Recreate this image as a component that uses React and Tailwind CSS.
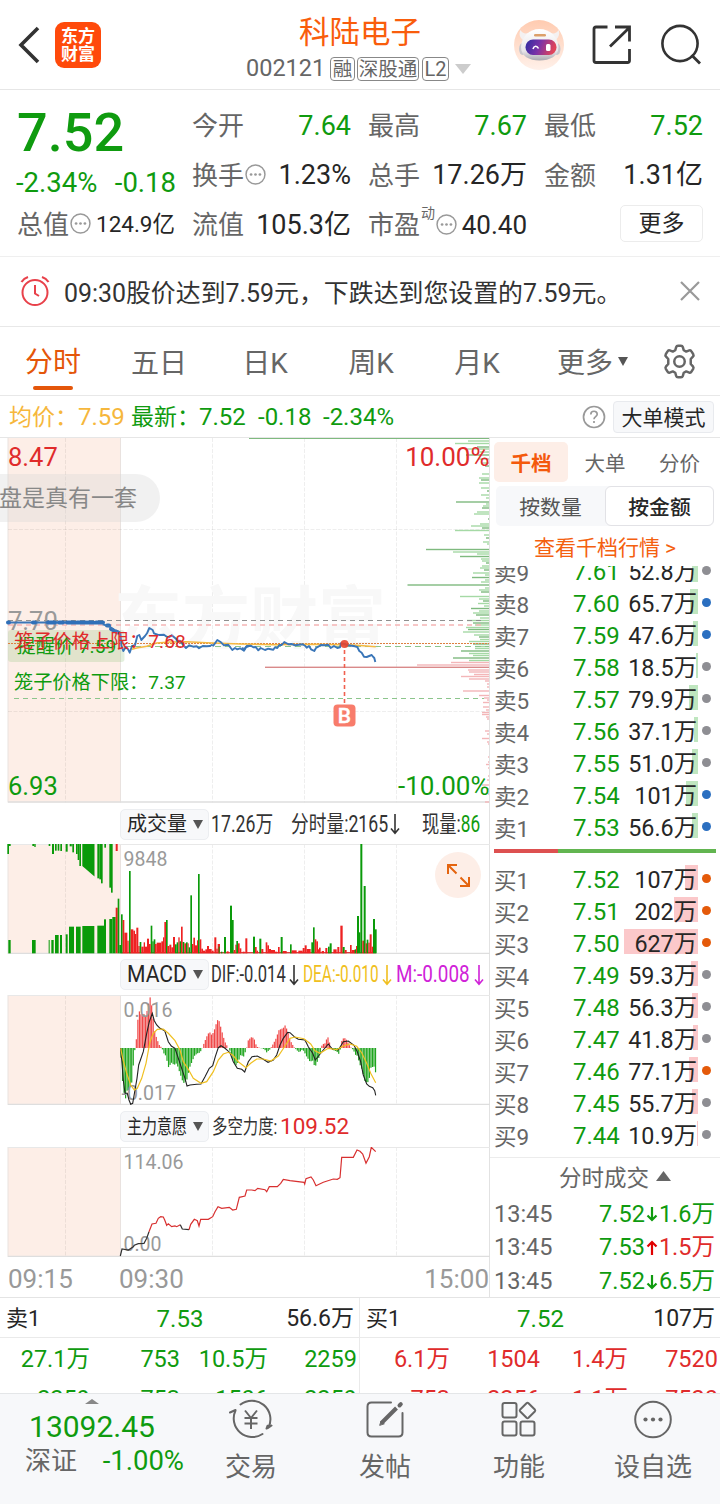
import React from "react";

const GREEN = "#0f9b0f";
const RED = "#e02b2b";

const pts = (arr, oy, ox = 0) =>
  arr.map(([x, y]) => `${(ox + x / 3).toFixed(1)},${(oy + y / 3).toFixed(1)}`).join(" ");

/* ---------- shared bits ---------- */

function Dots() {
  return (
    <svg className="mb-[2px] ml-px shrink-0" width="21" height="21" viewBox="0 0 20 20">
      <circle cx="10" cy="10" r="9" fill="none" stroke="#999" strokeWidth="1.4" />
      <circle cx="5.8" cy="10" r="1.3" fill="#999" />
      <circle cx="10" cy="10" r="1.3" fill="#999" />
      <circle cx="14.2" cy="10" r="1.3" fill="#999" />
    </svg>
  );
}

function Down({ className = "" }) {
  return (
    <svg className={`shrink-0 ${className}`} width="10" height="22" viewBox="0 0 10 22" fill="none" stroke="currentColor" strokeWidth="1.6">
      <path d="M5 1V20M1 15.5L5 20.2L9 15.5" />
    </svg>
  );
}

function Caret({ className = "" }) {
  return (
    <svg className={`shrink-0 ${className}`} width="10" height="9" viewBox="0 0 10 9">
      <path d="M0 0H10L5 9Z" fill="#555" />
    </svg>
  );
}

/* ---------- header ---------- */

function Header() {
  return (
    <header className="flex h-[90px] shrink-0 border-b border-[#e6e6e6]">
      <div className="flex w-[246px] items-center pl-[17px]">
        <svg width="24" height="40" viewBox="0 0 24 40" fill="none" stroke="#333" strokeWidth="3.6">
          <path d="M21 3L4 20L21 37" />
        </svg>
        <div className="ml-[14px] flex h-[46px] w-[46px] flex-col items-center justify-center rounded-[9px] bg-[#ff4a0b] text-[17px] leading-[18px] font-bold text-white">
          <span>东方</span>
          <span>财富</span>
        </div>
      </div>
      <div className="flex w-[228px] flex-col items-center">
        <div className="mt-[15px] flex h-9 items-center text-[30.5px] leading-none text-[#f95d0c]">科陆电子</div>
        <div className="flex h-[36px] w-full items-center text-[23.5px] leading-none text-[#666]">
          <span className="w-[84px]">002121</span>
          <span className="mr-[2px] flex h-6 w-[25px] items-center justify-center rounded-[4px] border border-[#888] pt-px text-[19.5px]">融</span>
          <span className="mr-[3px] flex h-6 w-[62px] items-center justify-center rounded-[4px] border border-[#888] pt-px text-[19.5px]">深股通</span>
          <span className="flex h-6 w-[27px] items-center justify-center rounded-[4px] border border-[#888] text-[20px]">L2</span>
          <svg className="ml-[6px]" width="16" height="10" viewBox="0 0 16 10">
            <path d="M0 0H16L8 10Z" fill="#ccc" />
          </svg>
        </div>
      </div>
      <div className="flex flex-1 items-center pl-10">
        <svg width="50" height="50" viewBox="0 0 50 50">
          <defs>
            <linearGradient id="halo" x1="0" y1="0" x2="0" y2="1">
              <stop offset="0" stopColor="#ffcbb0" />
              <stop offset="1" stopColor="#fff1ea" />
            </linearGradient>
            <linearGradient id="shell" x1="0" y1="0" x2="0" y2="1">
              <stop offset="0" stopColor="#ffffff" />
              <stop offset="0.7" stopColor="#e8e6e9" />
              <stop offset="1" stopColor="#a9a9b0" />
            </linearGradient>
            <linearGradient id="visor" x1="0" y1="0" x2="1" y2="0.2">
              <stop offset="0" stopColor="#2c2ba0" />
              <stop offset="0.5" stopColor="#7a32a8" />
              <stop offset="1" stopColor="#e0445a" />
            </linearGradient>
          </defs>
          <circle cx="25" cy="25" r="25" fill="url(#halo)" />
          <path d="M9 20C5 17 5 13 6.500 10C8 13 11 14 14 13L14 20ZM42 20C45 17 46 13 44.500 10C43 13 40 14 37 13L37 20Z" fill="#f4f1f1" />
          <ellipse cx="8.500" cy="29" rx="3.500" ry="6" fill="#c9c8ce" />
          <ellipse cx="43" cy="29" rx="3.500" ry="6" fill="#c9c8ce" />
          <path d="M25.500 9C36 9 44 17 44.500 27C44.500 36 36 40.500 25.500 40.500C15 40.500 7 36 7 27C7.500 17 15 9 25.500 9Z" fill="url(#shell)" />
          <rect x="20" y="14" width="12" height="2.600" rx="1.300" fill="#dca06a" />
          <rect x="11.500" y="19.500" width="31" height="15.500" rx="7.500" fill="url(#visor)" />
          <path d="M19 29C20 25.500 23 25.500 24.500 28.500" fill="none" stroke="#fff" strokeWidth="1.600" />
          <rect x="32" y="24" width="4.500" height="7" rx="1.500" fill="#fff" />
        </svg>
        <svg className="ml-[28px]" width="40" height="40" viewBox="0 0 40 40" fill="none" stroke="#333" strokeWidth="2.8">
          <path d="M15.500 2H4Q2 2 2 4V35.500Q2 37.500 4 37.500H35.500Q37.500 37.500 37.500 35.500V24" />
          <path d="M23 2H37.500V16.500M37 3L18 21.500" />
        </svg>
        <svg className="ml-[29px]" width="42" height="42" viewBox="0 0 42 42" fill="none" stroke="#333" strokeWidth="2.600">
          <circle cx="19" cy="19.500" r="17.600" />
          <path d="M30.500 31L39 39.500" strokeWidth="2.800" />
        </svg>
      </div>
    </header>
  );
}

/* ---------- quote summary ---------- */

function Pair({ label, value, green, extra, h = "h-[49px]" }) {
  return (
    <div className={`flex items-center justify-between leading-none ${h}`}>
      <span className="flex items-center text-[26px] text-[#666]">{label}{extra}</span>
      <span className={`text-[27px] whitespace-nowrap ${green ? "text-[#0f9b0f]" : "text-[#262626]"}`}>{value}</span>
    </div>
  );
}

function Quote() {
  return (
    <section className="grid h-[167px] shrink-0 grid-cols-[158px_159px_159px_159px] gap-x-[17px] border-b border-[#efefef] pl-[17px]">
      <div className="pt-2">
        <div className="flex h-[69px] items-center text-[54px] leading-none font-medium text-[#0f9b0f]">7.52</div>
        <div className="-ml-px flex h-8 w-[160px] items-center justify-between text-[27.5px] leading-none whitespace-nowrap text-[#0f9b0f]">
          <span>-2.34%</span>
          <span>-0.18</span>
        </div>
        <div className="flex h-[50px] items-center justify-between pt-px leading-none">
          <span className="flex items-center text-[26px] text-[#666]">总值<Dots /></span>
          <span className="text-[22.5px] text-[#262626]">124.9亿</span>
        </div>
      </div>
      <div className="pt-[11px]">
        <Pair h="h-[50px]" label="今开" value="7.64" green />
        <Pair label="换手" value="1.23%" extra={<Dots />} />
        <Pair h="h-[50px]" label="流值" value="105.3亿" />
      </div>
      <div className="pt-[11px]">
        <Pair h="h-[50px]" label="最高" value="7.67" green />
        <Pair label="总手" value="17.26万" />
        <div className="flex h-[50px] items-center justify-between leading-none">
          <span className="flex items-center text-[26px] text-[#666]">
            市盈
            <span className="mb-6 ml-px text-[14px]">动</span>
            <Dots />
          </span>
          <span className="text-[26px] text-[#262626]">40.40</span>
        </div>
      </div>
      <div className="pt-[11px]">
        <Pair h="h-[50px]" label="最低" value="7.52" green />
        <Pair label="金额" value="1.31亿" />
        <div className="flex h-[46px] items-center justify-end">
          <button className="flex h-[37px] w-[83px] items-center justify-center rounded-[5px] border border-[#ececec] text-[23px] leading-none text-[#262626]">更多</button>
        </div>
      </div>
    </section>
  );
}

function Alert() {
  return (
    <section className="flex h-[70px] shrink-0 items-center border-b border-[#e8e8e8] pl-5">
      <svg className="mb-[2px]" width="30" height="32" viewBox="0 0 30 32" fill="none" stroke="#e8414a" strokeWidth="2">
        <circle cx="15" cy="17.500" r="12.500" />
        <path d="M15 10V18.500L19 21" />
        <path d="M1.500 7C3 4.500 5 3 8 2M28.500 7C27 4.500 25 3 22 2" strokeWidth="2.200" />
      </svg>
      <div className="ml-[14px] flex-1 pt-[5px] text-[24.9px] leading-none whitespace-nowrap text-[#333]">09:30股价达到7.59元，下跌达到您设置的7.59元。</div>
      <svg className="mr-5 mb-[2px]" width="20" height="20" viewBox="0 0 20 20" stroke="#999" strokeWidth="2.200">
        <path d="M1 1L19 19M19 1L1 19" />
      </svg>
    </section>
  );
}

function Tabs() {
  return (
    <nav className="flex h-[69px] shrink-0 items-center border-b border-[#e8e8e8] text-[28px] leading-none text-[#666]">
      <div className="flex h-full w-[106px] flex-col items-center text-[#e4560a]">
        <span className="flex h-[59px] items-center pt-[13px]">分时</span>
        <span className="h-1 w-10 rounded-full bg-[#e4560a]" />
      </div>
      {["五日", "日K", "周K", "月K"].map((t) => (
        <div key={t} className="flex h-full w-[106px] justify-center pt-[23px]">{t}</div>
      ))}
      <div className="flex h-full items-start pt-[23px] pl-[27px]">
        更多
        <Caret className="mt-[7px] ml-[5px]" />
      </div>
      <svg className="ml-[34px]" width="35" height="35" viewBox="0 0 24 24" fill="none" stroke="#666" strokeWidth="1.700" strokeLinejoin="round">
        <path d="M9.700 2.200Q10 1.200 11 1.200H13Q14 1.200 14.300 2.200L14.900 4.300L16.600 5.200L18.700 4.400Q19.700 4.100 20.200 5L21.400 7Q21.900 7.900 21.200 8.700L19.700 10.300V13.700L21.200 15.300Q21.900 16.100 21.400 17L20.200 19Q19.700 19.900 18.700 19.600L16.600 18.800L14.900 19.700L14.300 21.800Q14 22.800 13 22.800H11Q10 22.800 9.700 21.800L9.100 19.700L7.400 18.800L5.300 19.600Q4.300 19.900 3.800 19L2.600 17Q2.100 16.100 2.800 15.300L4.300 13.700V10.300L2.800 8.700Q2.100 7.900 2.600 7L3.800 5Q4.300 4.100 5.300 4.400L7.400 5.200L9.100 4.300Z" />
        <circle cx="12" cy="12" r="3.600" />
      </svg>
    </nav>
  );
}

function InfoRow() {
  return (
    <div className="flex h-[42px] shrink-0 items-center border-b border-[#e6e6e6] pt-px pl-[9px] text-[24px] leading-none whitespace-nowrap text-[#0f9b0f]">
      <span className="w-[69px] pt-px text-[23px] text-[#f6b73c]">均价：</span>
      <span className="w-[53px] text-[#f6b73c]">7.59</span>
      <span className="w-[68px] pt-px text-[23px]">最新：</span>
      <span className="w-[59px]">7.52</span>
      <span className="w-[65px]">-0.18</span>
      <span className="flex-1">-2.34%</span>
      <svg width="24" height="24" viewBox="0 0 24 24" fill="none" stroke="#999" strokeWidth="1.700">
        <circle cx="12" cy="12" r="10.500" />
        <path d="M8.800 9.500C8.800 5.200 15.200 5.200 15.200 9.300C15.200 11.700 12 11.700 12 14.300M12 16V18" />
      </svg>
      <span className="mr-[6px] ml-[7px] flex h-8 w-[101px] items-center justify-center rounded-[4px] border border-[#e8eaee] bg-[#f7f8fa] pt-[3px] text-[21px] text-[#262626]">大单模式</span>
    </div>
  );
}

/* ---------- charts ---------- */

const priceA = [[308, 565], [318, 568], [330, 572], [340, 582], [350, 585], [361, 590], [364, 628], [370, 645], [378, 632], [383, 638], [389, 650], [396, 630], [405, 628], [412, 600], [418, 597], [424, 612], [435, 600], [441, 592], [448, 576], [458, 582], [462, 592], [475, 597], [492, 596], [500, 602], [507, 604], [515, 598], [528, 608], [533, 618], [540, 614], [550, 628], [558, 636], [568, 628], [580, 632], [590, 631], [597, 637], [608, 630], [620, 631], [630, 630], [635, 627], [640, 629], [652, 612], [663, 619], [672, 628], [685, 626], [697, 642], [705, 636], [712, 640], [720, 637], [730, 643], [737, 634], [747, 630]];
const priceB = [[7, 634], [12, 644], [20, 630], [33, 629], [40, 634], [47, 633], [55, 643], [62, 636], [75, 642], [85, 638], [100, 641], [105, 634], [112, 636], [118, 627], [125, 627], [133, 618], [145, 625], [155, 624], [165, 628], [188, 625], [195, 629], [200, 635], [207, 630], [213, 640], [223, 645], [228, 636], [235, 632], [242, 627], [255, 628], [265, 626], [272, 636], [282, 630], [292, 636], [300, 634], [303, 622], [313, 624], [325, 628], [345, 631], [352, 633], [358, 645], [365, 650], [372, 662], [380, 663], [395, 657], [400, 663], [403, 666], [406, 678]];
const avg = [[396, 640], [410, 636], [440, 631], [470, 621], [510, 618], [560, 617], [620, 620], [720, 624], [820, 626], [950, 625], [1060, 627], [1090, 629], [1127, 632]];

const depthSell = [[438.3, 240], [441, 21], [443.5, 34], [447, 12], [449, 22], [452, 9], [455, 23], [459, 11], [463, 8], [466, 4], [474, 7], [478, 10], [480, 8], [483, 10], [488, 8], [491, 2], [495, 8], [498, 3], [502, 33], [504, 3], [506, 6], [508, 7], [512, 12], [514, 15], [519, 1], [524, 9], [526, 18], [528, 7], [530.5, 34], [535, 5], [538, 3], [542, 6], [544, 2], [549.500, 63], [552, 36], [554, 12], [556.500, 29], [559, 8], [561, 7], [563, 3], [566, 7], [568, 9], [570, 5], [573, 16], [575, 4], [577.5, 17], [580, 4], [582, 8], [585, 81.5], [588, 4], [590, 10], [592, 8], [596.5, 29], [599, 10], [601, 6], [603.500, 11], [606, 5], [608.5, 18], [611, 10], [613, 16], [615, 13], [618, 9], [620.500, 22], [623, 16], [625, 14], [627.500, 23], [629.500, 21], [632, 26], [635, 15], [637, 10], [639.500, 9], [641.500, 20], [644, 16], [646.500, 14], [648.500, 14], [651, 28], [653.500, 20], [655.500, 16], [658, 36], [660.500, 20]];
const depthBuy = [[662.500, 38], [665, 72], [667.3, 224], [670, 21], [672, 20], [674.500, 15], [676.500, 28], [679, 20], [681, 4], [684, 2], [687, 2], [691, 26], [695.500, 10], [698, 5], [700, 2], [702.500, 6], [707, 6], [710, 3], [712.500, 7], [714.500, 7], [717, 3], [719, 2], [731, 4], [734, 2], [738.500, 7], [742, 2], [744, 1], [757, 1], [762, 1], [764.500, 3], [768, 1], [776, 1], [780, 2], [785, 7], [789, 2], [794, 1], [802, 4]];

function Grid({ top, bottom }) {
  return (
    <g>
      <rect x="8" y={top} width="112.500" height={bottom - top} fill="#fdeee7" />
      <g stroke="#000" strokeOpacity="0.065" strokeWidth="1" strokeDasharray="4 1.500">
        {[65.5, 212.5, 304.5, 396.5].map((x) => (
          <path key={x} d={`M${x} ${top}V${bottom}`} />
        ))}
      </g>
      <path d={`M8 ${top}V${bottom}M120.500 ${top}V${bottom}`} stroke="#e9e2df" />
      <path d={`M8 ${bottom - 0.5}H490`} stroke="#dedede" strokeWidth="1.400" />
    </g>
  );
}

function PriceChart() {
  return (
    <svg className="block shrink-0" width="490" height="365" viewBox="0 438 490 365">
      <Grid top={438} bottom={802.500} />
      <path d="M8 529.500H489M8 711.500H489" stroke="#000" strokeOpacity="0.065" strokeDasharray="4 1.500" />
      <text x="114" y="643" fontSize="68" fontWeight="700" fill="#f8f8f8">东方财富</text>
      {depthSell.map(([y, l], i) => (
        <rect key={i} x={489 - l} y={y - 0.7} width={l} height="1.400" fill={i % 3 ? "#a5d9a5" : "#7fba7f"} />
      ))}
      {depthBuy.map(([y, l], i) => (
        <rect key={i} x={489 - l} y={y - 0.7} width={l} height="1.400" fill={i === 2 ? "#d98a8a" : "#f3b6b8"} />
      ))}
      <path d="M8 620.500H484" stroke="#8f8f8f" strokeWidth="1.200" strokeDasharray="5 4" />
      <path d="M8 625H484" stroke="#f5b5b5" strokeWidth="1.400" strokeDasharray="5 4" />
      <rect x="8" y="630" width="116.500" height="32" rx="3" fill="#9bc98a" fillOpacity="0.28" />
      <path d="M8 643.500H489" stroke="#dd8040" strokeWidth="1" strokeDasharray="2 1" />
      <path d="M125 646.500H489" stroke="#8cc58c" strokeWidth="1.200" strokeDasharray="6 4" />
      <path d="M14 698.500H484" stroke="#8cc58c" strokeWidth="1.200" strokeDasharray="5 4" />
      <polyline points={pts(avg, 436)} fill="none" stroke="#f5b942" strokeWidth="1.500" />
      <text x="8" y="629.500" fontSize="25.500" fill="#999">7.70</text>
      <path d="M8 622.500H103" stroke="#3a76b8" strokeWidth="2" />
      <path d="M8 622.500H9M33 622.500H35M48 622.500H55M59 622.500H63M67 622.500H74M77 622.500H86M88 622.500H93M96 622.500H103M107 625.500H109M111 629L113 630M116 631.500L118 632.500" stroke="#2f6fb8" strokeWidth="4" strokeLinecap="round" />
      <g fill="none" stroke="#3a76b8" strokeWidth="1.900" strokeLinejoin="round">
        <polyline points={pts(priceA, 436)} />
        <polyline points={pts(priceB, 436, 240)} />
      </g>
      <g fontSize="25.500">
        <text x="8" y="466" fill={RED}>8.47</text>
        <text x="8" y="795" fill={GREEN}>6.93</text>
        <text x="489.500" y="466" fill={RED} textAnchor="end" fontSize="26">10.00%</text>
        <text x="489.500" y="795" fill={GREEN} textAnchor="end" fontSize="26">-10.00%</text>
      </g>
      <g fontSize="19.200">
        <text x="16.500" y="652.500" fill={GREEN}>提醒价 7.59</text>
        <text x="14" y="648" fill={RED}>笼子价格上限：7.68</text>
        <text x="14" y="689" fill={GREEN}>笼子价格下限：7.37</text>
      </g>
      <path d="M344.500 650V704" stroke="#f0604f" strokeWidth="1.600" strokeDasharray="4 3" />
      <circle cx="344.500" cy="644" r="4" fill="#e8452f" fillOpacity="0.9" />
      <rect x="333.500" y="704.500" width="22" height="22" rx="4" fill="#f87c6b" />
      <text x="344.500" y="722.500" fontSize="21" fontWeight="500" fill="#fff" textAnchor="middle" stroke="#fff" strokeWidth="0.400">B</text>
    </svg>
  );
}

const auctionTop = [[22, 27, 162], [27, 32, 138], [97, 103, 138], [103, 107, 141], [146, 151, 138], [156, 162, 162], [165, 170, 152], [173, 178, 152], [181, 186, 153], [197, 203, 155], [209, 214, 139], [214, 217, 139], [217, 222, 157], [228, 233, 162], [233, 238, 180], [238, 243, 198], [292, 298, 235], [298, 303, 238], [303, 308, 250], [313, 318, 143], [328, 333, 263], [333, 338, 278]];
const auctionBottom = [[25, 32, 420], [96, 107, 420], [146, 149, 420], [154, 161, 420], [165, 176, 405], [180, 186, 405], [197, 203, 403], [207, 222, 380], [228, 242, 380], [247, 283, 378], [292, 312, 377], [312, 318, 358], [328, 337, 357], [337, 347, 351]];
const vol = [["g", 353, 358, 296], ["g", 358, 363, 435], ["g", 363, 368, 343], ["r", 368, 373, 360], ["r", 373, 382, 398], ["r", 382, 386, 422], ["g", 387, 392, 213], ["r", 392, 400, 388], ["r", 400, 405, 392], ["r", 405, 409, 402], ["r", 409, 415, 383], ["r", 415, 419, 438], ["g", 419, 424, 426], ["r", 424, 431, 440], ["r", 431, 435, 427], ["r", 435, 441, 440], ["r", 441, 447, 416], ["g", 452, 457, 377], ["r", 447, 452, 432], ["g", 457, 461, 424], ["g", 461, 466, 418], ["r", 464, 470, 432], ["r", 470, 484, 428], ["r", 484, 489, 424], ["r", 489, 493, 412], ["r", 493, 498, 366], ["g", 498, 503, 360], ["r", 502, 508, 438], ["r", 508, 514, 434], ["r", 514, 519, 442], ["r", 519, 525, 411], ["g", 525, 530, 433], ["g", 530, 535, 427], ["r", 535, 539, 412], ["g", 539, 543, 424], ["r", 543, 548, 380], ["g", 548, 553, 426], ["r", 553, 558, 430], ["g", 558, 563, 427], ["r", 563, 566, 430], ["g", 566, 570, 442], ["g", 571, 576, 286], ["r", 576, 580, 432], ["r", 580, 585, 413], ["r", 585, 591, 436], ["r", 591, 595, 421], ["g", 594, 599, 222], ["r", 599, 604, 418], ["r", 604, 609, 446], ["r", 609, 616, 452], ["r", 616, 621, 448], ["r", 621, 627, 438], ["r", 627, 635, 447], ["r", 635, 641, 452], ["r", 643, 649, 412], ["r", 649, 653, 446], ["r", 653, 660, 432], ["g", 656, 659, 440], ["g", 663, 667, 455], ["g", 672, 678, 411], ["r", 680, 686, 454], ["g", 690, 696, 317], ["g", 696, 701, 360], ["r", 701, 706, 450], ["r", 706, 710, 434], ["g", 709, 714, 423], ["r", 714, 719, 430], ["r", 719, 724, 445], ["r", 728, 734, 455], ["r", 736, 742, 415], ["g", 759, 765, 410], ["r", 765, 770, 441], ["r", 770, 774, 452], ["g", 778, 784, 416], ["r", 784, 790, 447], ["r", 797, 802, 427], ["r", 802, 807, 436], ["r", 807, 813, 447], ["r", 813, 825, 450], ["r", 825, 832, 455], ["r", 834, 839, 441], ["g", 842, 848, 411], ["r", 848, 860, 453], ["g", 870, 875, 433], ["r", 875, 890, 451], ["r", 895, 908, 452], ["r", 908, 914, 444], ["r", 914, 920, 436], ["r", 920, 932, 447], ["g", 934, 939, 427], ["g", 939, 944, 382], ["r", 944, 949, 418], ["r", 949, 954, 424], ["r", 954, 958, 448], ["r", 957, 962, 443], ["r", 965, 972, 453], ["r", 976, 982, 444], ["g", 984, 989, 440], ["g", 989, 995, 430], ["r", 1000, 1010, 448], ["r", 1012, 1018, 441], ["r", 1021, 1028, 377], ["g", 1028, 1034, 441], ["r", 1034, 1040, 450], ["r", 1050, 1055, 435], ["r", 1055, 1065, 450], ["g", 1064, 1069, 448], ["r", 1068, 1073, 438], ["g", 1071, 1077, 348], ["g", 1077, 1081, 397], ["g", 1081, 1087, 132], ["r", 1087, 1092, 422], ["g", 1091, 1097, 258], ["r", 1097, 1101, 430], ["g", 1100, 1105, 419], ["r", 1105, 1109, 428], ["r", 1109, 1115, 403], ["r", 1115, 1119, 440], ["g", 1119, 1125, 357], ["g", 1125, 1130, 388]];

function VolumeChart() {
  return (
    <svg className="block shrink-0" width="490" height="110" viewBox="0 844 490 110">
      <Grid top={844} bottom={954} />
      <path d="M8 844.500H490" stroke="#e8e8e8" />
      <g fill="#0a9a0a">
        {auctionTop.map(([a, b, y], i) => (
          <rect key={i} x={a / 3} y="844" width={(b - a) / 3} height={(y - 132) / 3} />
        ))}
        <path d="M82.300 844H94.500V876.500L82.300 866Z" />
        {auctionBottom.map(([a, b, y], i) => (
          <rect key={i} x={a / 3} y={800 + y / 3} width={(b - a) / 3} height={(460 - y) / 3} />
        ))}
      </g>
      <rect x="115.700" y="844" width="2" height="7" fill="#e82020" />
      <rect x="115.700" y="907.700" width="2" height="45.600" fill="#e82020" />
      <rect x="120.500" y="952" width="255.500" height="1.300" fill="#d94040" />
      <text x="123.500" y="865.500" fontSize="19.500" fill="#999">9848</text>
      {vol.map(([c, a, b, y], i) => (
        <rect key={i} x={a / 3} y={800 + y / 3} width={(b - a) / 3} height={(460 - y) / 3} fill={c === "g" ? "#0a9a0a" : "#ee2222"} />
      ))}
    </svg>
  );
}

const macd = [[362, 746], [364, 800], [366, 835], [370, 855], [375, 908], [380, 872], [385, 872], [390, 862], [395, 850], [402, 772], [405, 745], [408, 733], [412, 672], [417, 632], [424, 645], [430, 640], [437, 648], [442, 630], [446, 610], [449, 588], [453, 600], [458, 640], [463, 690], [470, 715], [478, 735], [486, 744], [490, 758], [498, 768], [505, 802], [515, 788], [522, 795], [530, 790], [540, 820], [550, 850], [560, 842], [565, 820], [570, 800], [575, 788], [583, 768], [592, 760], [600, 758], [607, 744], [612, 730], [620, 710], [628, 695], [636, 706], [643, 690], [652, 660], [657, 662], [662, 680], [670, 710], [676, 728], [685, 744], [692, 756], [697, 775], [707, 797], [715, 785], [722, 765], [732, 770], [738, 748], [742, 738], [745, 720], [756, 710], [763, 718], [770, 740], [780, 744], [790, 746], [795, 750], [800, 757], [810, 748], [816, 738], [827, 718], [837, 690], [850, 684], [855, 676], [862, 690], [870, 720], [880, 738], [884, 744], [890, 750], [898, 757], [908, 748], [915, 760], [920, 770], [930, 785], [938, 782], [945, 802], [952, 785], [960, 765], [963, 744], [967, 733], [975, 730], [983, 709], [988, 725], [992, 742], [998, 750], [1010, 754], [1016, 762], [1021, 748], [1024, 725], [1032, 712], [1040, 720], [1048, 735], [1054, 744], [1060, 750], [1067, 765], [1073, 768], [1078, 790], [1087, 810], [1095, 845], [1103, 848], [1108, 835], [1113, 802], [1122, 800], [1128, 822]];

const macdBars = (() => {
  const out = [];
  for (let x = 363; x <= 1127; x += 4.6) {
    let i = 0;
    while (i < macd.length - 2 && macd[i + 1][0] < x) i++;
    const [x0, y0] = macd[i];
    const [x1, y1] = macd[i + 1];
    out.push([x, y0 + ((y1 - y0) * (x - x0)) / (x1 - x0)]);
  }
  return out;
})();

const dif = [[362, 745], [366, 790], [370, 840], [375, 880], [382, 880], [387, 900], [392, 913], [398, 910], [405, 870], [411, 835], [416, 795], [430, 755], [440, 700], [448, 665], [457, 640], [463, 662], [470, 675], [480, 685], [494, 692], [505, 725], [514, 738], [525, 745], [540, 790], [555, 835], [561, 858], [570, 855], [590, 853], [603, 852], [615, 830], [628, 805], [638, 797], [646, 770], [655, 743], [663, 737], [675, 745], [690, 758], [700, 785], [712, 805], [725, 808], [734, 816], [745, 785], [756, 770], [772, 768], [790, 778], [804, 787], [820, 780], [830, 765], [840, 735], [850, 715], [863, 697], [870, 698], [885, 712], [895, 718], [915, 720], [925, 740], [938, 760], [946, 780], [958, 765], [970, 750], [985, 732], [997, 747], [1015, 750], [1030, 725], [1045, 723], [1062, 736], [1072, 755], [1082, 785], [1090, 825], [1100, 852], [1108, 859], [1118, 863], [1124, 872], [1127, 886]];
const dea = [[362, 745], [368, 775], [380, 820], [392, 855], [403, 870], [412, 865], [425, 835], [438, 790], [450, 725], [460, 700], [472, 688], [490, 687], [505, 700], [525, 722], [540, 750], [550, 785], [565, 808], [580, 835], [603, 850], [620, 845], [640, 815], [655, 780], [670, 762], [685, 757], [698, 765], [715, 785], [738, 803], [752, 790], [770, 777], [790, 777], [812, 783], [835, 768], [855, 738], [870, 715], [885, 711], [912, 716], [932, 732], [945, 752], [960, 760], [985, 745], [1010, 749], [1030, 738], [1050, 732], [1070, 739], [1085, 758], [1100, 790], [1112, 820], [1127, 848]];

function MacdChart() {
  return (
    <svg className="block shrink-0" width="490" height="110" viewBox="0 995 490 110">
      <Grid top={995} bottom={1105} />
      <path d="M8 995.500H490" stroke="#e8e8e8" />
      {macdBars.map(([x, y], i) => {
        const v = 800 + y / 3;
        const up = v < 1048;
        return <rect key={i} x={x / 3 - 0.6} y={up ? v : 1048} width="1.200" height={Math.abs(v - 1048)} fill={up ? "#f04848" : "#1fa51f"} />;
      })}
      <text x="123.500" y="1017" fontSize="19.500" fill="#999">0.016</text>
      <text x="121.500" y="1099.500" fontSize="19.500" fill="#999">-0.017</text>
      <polyline points={pts(dif, 800)} fill="none" stroke="#222" strokeWidth="1.100" />
      <polyline points={pts(dea, 800)} fill="none" stroke="#f0c020" strokeWidth="1.200" />
    </svg>
  );
}

const force1 = [[361, 468], [366, 447], [385, 450], [400, 440], [403, 436], [415, 431], [432, 430], [440, 415], [447, 395]];
const force2 = [[447, 395], [456, 372], [468, 370], [475, 355], [482, 350], [490, 351], [494, 360], [500, 376], [505, 371], [515, 380], [525, 378], [530, 380], [541, 374]];
const force3 = [[541, 374], [547, 387], [567, 389]];
const force4 = [[567, 389], [572, 373], [583, 358], [592, 362], [597, 378], [602, 358], [625, 358], [638, 350], [645, 335], [654, 320], [665, 325], [688, 322], [698, 330], [709, 328], [718, 292], [735, 288], [740, 270], [755, 270], [765, 272], [773, 265], [795, 269], [800, 275], [808, 260], [832, 260], [842, 250], [850, 238], [870, 242], [912, 247], [914, 252], [918, 236], [933, 231], [940, 240], [948, 257], [970, 247], [1000, 237], [1012, 238], [1020, 233], [1025, 172], [1060, 172], [1071, 150], [1080, 154], [1088, 162], [1098, 190], [1108, 170], [1114, 142], [1127, 155]];

function ForceChart() {
  return (
    <svg className="block shrink-0" width="490" height="110" viewBox="0 1147 490 110">
      <Grid top={1147} bottom={1257} />
      <path d="M8 1147.500H490" stroke="#e8e8e8" />
      <text x="123.500" y="1168.500" fontSize="19.500" fill="#999">114.06</text>
      <text x="123.500" y="1251" fontSize="19.500" fill="#999">0.00</text>
      <g fill="none" strokeWidth="1.200">
        <polyline points={pts(force1, 1100)} stroke="#333" />
        <polyline points={pts(force2, 1100)} stroke="#d83030" />
        <polyline points={pts(force3, 1100)} stroke="#333" />
        <polyline points={pts(force4, 1100)} stroke="#d83030" />
      </g>
    </svg>
  );
}

function Selector({ children }) {
  return (
    <div className="flex h-[31px] w-[89px] shrink-0 items-center justify-between rounded-[5px] border border-[#eceef1] bg-[#f7f8fa] pr-[5px] pl-[6px] text-[#262626]">
      {children}
      <Caret />
    </div>
  );
}

function Charts() {
  return (
    <div className="relative flex w-[490px] shrink-0 flex-col border-r border-[#e2e2e2]">
      <PriceChart />
      <div className="absolute top-[36px] left-0 flex h-12 w-[160px] items-center rounded-r-full bg-[#d8d8d8]/35 text-[23px] leading-none text-[#888]"><span className="-ml-px">盘是真有一套</span></div>

      <div className="flex h-[41px] shrink-0 items-center pt-px pl-[120px] text-[23px] leading-none whitespace-nowrap text-[#333]">
        <Selector><span className="text-[20px]">成交量</span></Selector>
        <span className="w-[81px] pl-[2px]"><span className="inline-block origin-left scale-x-[0.77]">17.26万</span></span>
        <span className="w-[100px] pl-px"><span className="inline-block origin-left scale-x-[0.77]">分时量:2165</span></span>
        <Down />
        <span className="w-[40px] pl-[22px]"><span className="inline-block origin-left scale-x-[0.75]">现量:<span className="text-[#0f9b0f]">86</span></span></span>
      </div>
      <VolumeChart />
      <div className="absolute top-[414px] left-[435px] flex h-[46px] w-[46px] items-center justify-center rounded-full bg-[#fdeee7]">
        <svg width="23" height="23" viewBox="0 0 23 23" fill="none" stroke="#e4640f" strokeWidth="2">
          <path d="M1 10V1H10M1 1L9.500 9.500M22 13V22H13M22 22L13.500 13.500" />
        </svg>
      </div>

      <div className="flex h-[41px] shrink-0 items-center pl-[120px] text-[23px] leading-none whitespace-nowrap">
        <Selector><span className="w-[60px]"><span className="inline-block origin-left scale-x-[0.92]">MACD</span></span></Selector>
        <span className="w-[80px] pl-[2px] text-[#333]"><span className="inline-block origin-left scale-x-[0.72]">DIF:-0.014</span></span>
        <Down className="text-[#333]" />
        <span className="w-[83px] pl-[4px] text-[#f0bf20]"><span className="inline-block origin-left scale-x-[0.67]">DEA:-0.010</span></span>
        <Down className="text-[#f0bf20]" />
        <span className="w-[82px] pl-[4px] text-[#d022d8]"><span className="inline-block origin-left scale-x-[0.82]">M:-0.008</span></span>
        <Down className="text-[#d022d8]" />
      </div>
      <MacdChart />

      <div className="flex h-[42px] shrink-0 items-center pl-[120px] text-[22px] leading-none whitespace-nowrap text-[#333]">
        <Selector><span className="w-[60px] pt-px"><span className="inline-block origin-left scale-x-[0.75] text-[20px]">主力意愿</span></span></Selector>
        <span className="w-[71px] pt-px pl-[3px]"><span className="inline-block origin-left scale-x-[0.77] text-[20px]">多空力度:</span></span>
        <span className="text-[22.5px] text-[#e02b2b]">109.52</span>
      </div>
      <ForceChart />
      <div className="flex h-[40px] shrink-0 items-center pt-[3px] pl-2 text-[26px] leading-none text-[#999]">
        <span className="w-[111px]">09:15</span>
        <span className="flex-1">09:30</span>
        <span>15:00</span>
      </div>
    </div>
  );
}

/* ---------- order book ---------- */

const sells = [
  ["卖9", "7.61", "52.8万", 6, "gray"],
  ["卖8", "7.60", "65.7万", 8, "blue"],
  ["卖7", "7.59", "47.6万", 5, "blue"],
  ["卖6", "7.58", "18.5万", 2, "gray"],
  ["卖5", "7.57", "79.9万", 9, "gray"],
  ["卖4", "7.56", "37.1万", 4, "gray"],
  ["卖3", "7.55", "51.0万", 6, "gray"],
  ["卖2", "7.54", "101万", 12, "blue"],
  ["卖1", "7.53", "56.6万", 6, "blue"],
];
const buys = [
  ["买1", "7.52", "107万", 13, "orange"],
  ["买2", "7.51", "202万", 24, "orange"],
  ["买3", "7.50", "627万", 74, "orange"],
  ["买4", "7.49", "59.3万", 7, "gray"],
  ["买5", "7.48", "56.3万", 6, "gray"],
  ["买6", "7.47", "41.8万", 5, "gray"],
  ["买7", "7.46", "77.1万", 9, "orange"],
  ["买8", "7.45", "55.7万", 6, "gray"],
  ["买9", "7.44", "10.9万", 1, "gray"],
];
const dotColor = { gray: "bg-[#8e8e93]", blue: "bg-[#2b6fc0]", orange: "bg-[#e45a0a]" };

function BookRow({ row, bar }) {
  const [label, price, amount, w, dot] = row;
  return (
    <div className="relative flex h-8 shrink-0 items-center pl-[5px] leading-none">
      <div className={`absolute top-0 right-[22px] h-[25px] ${bar}`} style={{ width: w }} />
      <span className="relative -ml-px w-[79px] pt-px text-[22.5px] text-[#666]">{label}</span>
      <span className="relative mb-[3px] w-[50px] text-[24px] text-[#0f9b0f]">{price}</span>
      <span className="relative w-[74px] text-right text-[23.3px] text-[#262626]">{amount}</span>
      <span className={`relative mb-[6px] ml-[5px] h-[9px] w-[9px] rounded-full ${dotColor[dot]}`} />
    </div>
  );
}

function Trade({ price, up, amount }) {
  return (
    <div className="flex h-[34px] items-center pt-[3px] pr-[5px] pl-[4px] text-[23.5px] leading-none">
      <span className="flex-1 text-[#666]">13:45</span>
      <span className="text-[#0f9b0f]">{price}</span>
      <svg className={up ? "rotate-180 text-[#e00000]" : "text-[#0f9b0f]"} width="14" height="16" viewBox="0 0 14 16" fill="none" stroke="currentColor" strokeWidth="2.200">
        <path d="M7 1V14M2.500 9.500L7 14L11.500 9.500" />
      </svg>
      <span className={up ? "text-[#e02b2b]" : "text-[#0f9b0f]"}>{amount}</span>
    </div>
  );
}

function Book() {
  return (
    <div className="flex flex-1 flex-col">
      <div className="mt-1 flex h-[40px] shrink-0 items-center pl-1 text-[20.5px] leading-none text-[#666]">
        <span className="flex h-full w-[74px] items-center justify-center rounded-[5px] bg-[#fdeee7] pt-[5px] font-bold text-[#f4590b]">千档</span>
        <span className="w-[74px] pt-[5px] text-center">大单</span>
        <span className="w-[75px] pt-[5px] text-center">分价</span>
      </div>
      <div className="mt-1 mr-[6px] ml-[6px] flex h-10 shrink-0 rounded-[5px] bg-[#f7f8fa] text-[20.800px] leading-none text-[#555]">
        <span className="flex w-[109px] items-center justify-center pt-[4px]">按数量</span>
        <span className="flex flex-1 items-center justify-center rounded-[6px] border border-[#e2e2e6] bg-white pt-[4px] font-medium text-[#262626]">按金额</span>
      </div>
      <div className="flex h-[40px] shrink-0 items-center justify-center pt-[5px] text-[21px] leading-none text-[#f4600f]">查看千档行情 &gt;</div>
      <div className="flex h-[279px] shrink-0 flex-col justify-end overflow-hidden">
        {sells.map((r) => (
          <BookRow key={r[0]} row={r} bar="bg-[#bfe6bf]" />
        ))}
      </div>
      <div className="mt-[4px] mr-1 ml-1 flex h-1 shrink-0">
        <span className="w-[64px] bg-[#dd5050]" />
        <span className="flex-1 bg-[#62b550]" />
      </div>
      <div className="flex h-[304px] shrink-0 flex-col pt-[12px]">
        {buys.map((r) => (
          <BookRow key={r[0]} row={r} bar="bg-[#fbc8ca]" />
        ))}
      </div>
      <div className="flex h-[39px] shrink-0 items-center border-t border-[#ececec] pt-[2px] pl-[69px] text-[22.500px] leading-none text-[#666]">
        分时成交
        <svg className="mb-[5px] ml-[7px]" width="15" height="10" viewBox="0 0 15 10">
          <path d="M7.500 0L15 10H0Z" fill="#666" />
        </svg>
      </div>
      <Trade price="7.52" amount="1.6万" />
      <Trade price="7.53" up amount="1.5万" />
      <Trade price="7.52" amount="6.5万" />
    </div>
  );
}

/* ---------- level-2 queue ---------- */

function Half({ label, price, amount, color, rows }) {
  return (
    <div className="w-1/2 text-[23px] leading-none first:border-r first:border-[#eaeaea]">
      <div className="grid h-10 grid-cols-3 items-center border-b border-[#eaeaea] pt-[2px] pr-[5px] pl-[6px]">
        <span className="text-[22px] text-[#262626]">{label}</span>
        <span className="text-center text-[24px] text-[#0f9b0f]">{price}</span>
        <span className="text-right text-[#262626]">{amount}</span>
      </div>
      {rows.map((r, i) => (
        <div key={i} className={`grid h-10 grid-cols-[90px_90px_88px_1fr] items-center pt-[3px] pr-[2px] text-right text-[23.5px] ${color}`}>
          {r.map((c, j) => (
            <span key={j}>{c}</span>
          ))}
        </div>
      ))}
    </div>
  );
}

function Queue() {
  return (
    <section className="h-[96px] shrink-0 overflow-hidden border-t border-[#e4e4e4]">
      <div className="flex">
        <Half label="卖1" price="7.53" amount="56.6万" color="text-[#0f9b0f]" rows={[["27.1万", "753", "10.5万", "2259"], ["2259", "753", "1506", "2259"]]} />
        <Half label="买1" price="7.52" amount="107万" color="text-[#e02b2b]" rows={[["6.1万", "1504", "1.4万", "7520"], ["753", "2256", "1.1万", "7520"]]} />
      </div>
    </section>
  );
}

/* ---------- bottom bar ---------- */

function NavItem({ label, children }) {
  return (
    <div className="flex w-[134px] flex-col items-center">
      <svg className="mt-[3px]" width="44" height="44" viewBox="0 0 44 44" fill="none" stroke="#666" strokeWidth="2" strokeLinecap="round" strokeLinejoin="round">
        {children}
      </svg>
      <span className="mt-[13px] text-[26px] leading-none text-[#666]">{label}</span>
    </div>
  );
}

function BottomNav() {
  return (
    <footer className="flex h-[111px] shrink-0 border-t border-[#e4e6e8] bg-[#f7f8fa]">
      <div className="flex w-[184px] flex-col items-center leading-none text-[#0f9b0f]">
        <svg className="mt-[5px]" width="14" height="5" viewBox="0 0 14 5">
          <path d="M7 0L14 5H0Z" fill="#888" />
        </svg>
        <span className="mt-[8px] text-[30px]">13092.45</span>
        <div className="mt-[5px] flex w-full justify-between pl-[25px]">
          <span className="pt-px text-[26px] text-[#666]">深证</span>
          <span className="text-[27.500px]">-1.00%</span>
        </div>
      </div>
      <NavItem label="交易">
        <path d="M11.500 7.500A18.600 18.600 0 0 1 39.500 30.500M39.500 30.500L37.500 31.500L38.500 28.800M39 31L42.500 28.500" />
        <path d="M33.500 37A18.600 18.600 0 0 1 6.500 13.500M1 15.500L6.500 13L5.500 16.500" />
        <path d="M16 13.500L22 21L28 13.500M15.500 21H28.500M15.500 26.500H28.500M22 21V32" strokeLinecap="butt" />
      </NavItem>
      <NavItem label="发帖">
        <path d="M28 5.500H8.500Q4.500 5.500 4.500 9.500V35.500Q4.500 39.500 8.500 39.500H35.500Q39.500 39.500 39.500 35.500V16" />
        <path d="M18.500 26L33.500 11" strokeWidth="4" strokeLinecap="butt" />
        <path d="M36.500 8.500L37.800 7.200" strokeWidth="4" />
        <path d="M16.800 28L18 24L21 26.500Z" fill="#666" strokeWidth="1" />
      </NavItem>
      <NavItem label="功能">
        <rect x="5.500" y="6" width="14" height="14.500" rx="2" />
        <rect x="5.500" y="24.500" width="14" height="14" rx="2" />
        <rect x="23.500" y="24.500" width="14" height="14" rx="2" />
        <path d="M29.500 6.200Q30.500 5.300 31.500 6.200L37.800 12.500Q38.700 13.500 37.800 14.500L31.500 20.800Q30.500 21.700 29.500 20.800L23.200 14.500Q22.300 13.500 23.200 12.500Z" />
      </NavItem>
      <NavItem label="设自选">
        <circle cx="22" cy="22.500" r="17.800" />
        <g fill="#666" stroke="none">
          <circle cx="14.500" cy="22.500" r="2.100" />
          <circle cx="22" cy="22.500" r="2.100" />
          <circle cx="29.500" cy="22.500" r="2.100" />
        </g>
      </NavItem>
    </footer>
  );
}

export default function App() {
  return (
    <div className="flex h-[1504px] w-[720px] flex-col overflow-hidden bg-white font-['Roboto','Noto_Sans_CJK_SC',sans-serif]">
      <Header />
      <Quote />
      <Alert />
      <Tabs />
      <InfoRow />
      <main className="flex h-[859px] shrink-0">
        <Charts />
        <Book />
      </main>
      <Queue />
      <BottomNav />
    </div>
  );
}
